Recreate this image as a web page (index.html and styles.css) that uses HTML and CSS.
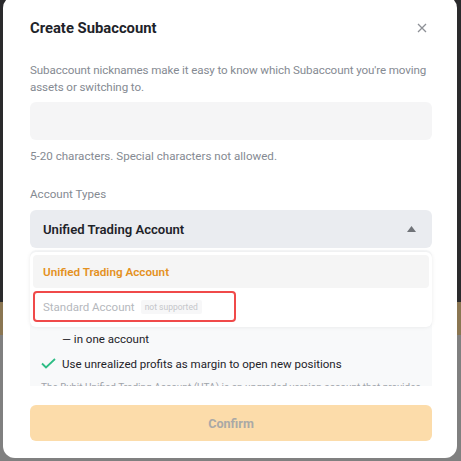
FILE: index.html
```html
<!DOCTYPE html>
<html>
<head>
<meta charset="utf-8">
<link rel="stylesheet" href="styles.css">
</head>
<body>
<div class="modal">
  <div class="header">
    <h1 class="title">Create Subaccount</h1>
    <svg class="close" width="10" height="10" viewBox="0 0 10 10"><path d="M1 1L9 9M9 1L1 9" stroke="#8d9096" stroke-width="1.3" fill="none"/></svg>
  </div>
  <p class="desc">Subaccount nicknames make it easy to know which Subaccount you're moving assets or switching to.</p>
  <div class="input"></div>
  <p class="hint">5-20 characters. Special characters not allowed.</p>
  <p class="label">Account Types</p>
  <div class="select-wrap">
    <div class="select">
      <span>Unified Trading Account</span>
      <svg class="caret" width="9" height="6" viewBox="0 0 9 6"><path d="M4.5 0L9 6H0Z" fill="#707378"/></svg>
    </div>
    <div class="panel">
      <div class="panel-inner">
        <div class="row"><span class="ico"></span><span>Trade spot, margin, futures and options</span></div>
        <div class="row"><span class="ico"></span><span>— in one account</span></div>
        <div class="row"><svg class="ico" width="15" height="11" viewBox="0 0 15 11"><path d="M1 5.5L5 9.5L14 1" stroke="#2ebd85" stroke-width="1.8" fill="none"/></svg><span>Use unrealized profits as margin to open new positions</span></div>
        <p class="faded">The Bybit Unified Trading Account (UTA) is an upgraded version account that provides</p>
      </div>
    </div>
    <div class="dropdown">
      <div class="opt active">Unified Trading Account</div>
      <div class="opt disabled"><span>Standard Account</span><span class="badge">not supported</span></div>
    </div>
  </div>
  <div class="btn">Confirm</div>
</div>
</body>
</html>
```
FILE: styles.css
```css
html, body { margin: 0; padding: 0; }
body {
  width: 461px;
  height: 461px;
  overflow: hidden;
  background: linear-gradient(to bottom, #2a2a2c 0, #2a2a2c 302px, #8a7652 302px, #8a7652 335px, #808080 335px);
  font-family: Roboto, "Noto Sans", sans-serif;
  padding-left: 3px;
  box-sizing: border-box;
}
.modal {
  width: 454px;
  height: 462px;
  margin-top: -4px;
  background: #fff;
  border-radius: 12px;
  box-sizing: border-box;
  padding: 20px 25px 0 27px;
}
.header {
  display: flex;
  justify-content: space-between;
  align-items: center;
  height: 24px;
}
.title {
  margin: 0;
  font-size: 14.8px;
  font-weight: 700;
  color: #1e2329;
  line-height: 24px;
}
.close { margin-right: 5px; }
.desc {
  margin: 22px 0 0;
  font-size: 11.6px;
  letter-spacing: -0.1px;
  line-height: 17px;
  color: #858a92;
}
.input {
  margin-top: 6px;
  height: 38px;
  background: #f5f5f6;
  border-radius: 6px;
}
.hint {
  margin: 8px 0 0;
  font-size: 11.6px;
  line-height: 17px;
  color: #858a92;
}
.label {
  margin: 21px 0 0;
  font-size: 11.6px;
  line-height: 17px;
  color: #858a92;
}
.select-wrap { position: relative; margin-top: 7px; }
.select {
  height: 38px;
  background: #eaecf0;
  border-radius: 6px;
  display: flex;
  align-items: center;
  justify-content: space-between;
  padding: 0 16px 0 13px;
  font-size: 13.1px;
  font-weight: 600;
  color: #1e2329;
}
.caret { margin-top: -1px; }
.panel {
  margin-top: 2px;
  height: 136px;
  overflow: hidden;
  background: #f8f9fa;
  border-radius: 6px 6px 0 0;
}
.panel-inner { padding: 51px 0 0 11px; }
.row {
  display: flex;
  align-items: center;
  height: 25px;
  font-size: 11.5px;
  color: #1e2329;
}
.ico { width: 15px; flex: none; margin-right: 6px; }
.faded {
  margin: 6px 0 0;
  font-size: 10px;
  line-height: 12px;
  color: #a0a4aa;
  white-space: nowrap;
}
.dropdown {
  position: absolute;
  left: 0;
  right: 0;
  top: 42px;
  height: 75px;
  background: #fff;
  border-radius: 6px;
  box-shadow: 0 0 4px rgba(0,0,0,0.08);
  box-sizing: border-box;
  padding: 3px;
}
.opt {
  height: 33px;
  display: flex;
  align-items: center;
  padding: 0 10px;
  font-size: 11.7px;
  border-radius: 4px;
}
.opt.active {
  background: #f5f5f5;
  color: #e4911e;
  font-weight: 600;
}
.opt.disabled {
  margin-top: 3px;
  width: 203px;
  height: 31px;
  box-sizing: border-box;
  border: 2px solid #f04a4a;
  border-radius: 4px;
  padding: 0 8px;
  color: #b5b8bd;
  font-size: 11.5px;
}
.badge {
  margin-left: 6px;
  background: #f7f7f8;
  color: #c4c6ca;
  font-size: 8.5px;
  padding: 2px 4px;
  border-radius: 2px;
}
.btn {
  margin-top: 19px;
  height: 36px;
  background: #fcdcaa;
  border-radius: 6px;
  display: flex;
  align-items: center;
  justify-content: center;
  font-size: 12.6px;
  font-weight: 700;
  color: #aaa9a6;
}
```
